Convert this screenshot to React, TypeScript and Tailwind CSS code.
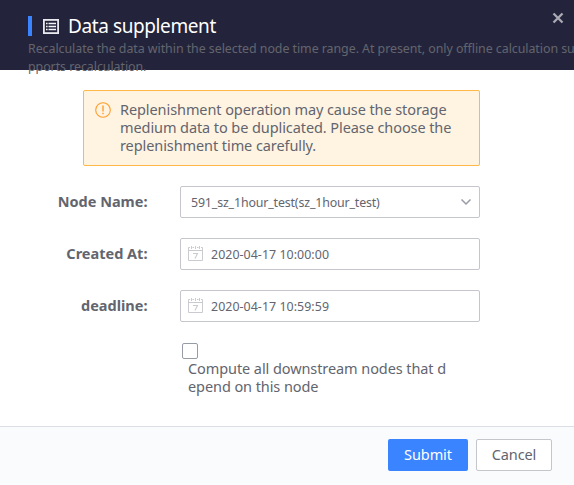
import React from "react";

function ListIcon() {
  return (
    <svg width="16" height="15" viewBox="0 0 16 15" fill="none" className="shrink-0">
      <rect x="0.9" y="0.9" width="14.2" height="13.2" stroke="#e9e9ef" strokeWidth="1.8" />
      <path d="M5.5 4.5H13M5.5 7.5H13M5.5 10.5H13M3 4.5H4.6M3 7.5H4.6M3 10.5H4.6" stroke="#f4f4f8" strokeWidth="1.5" />
    </svg>
  );
}

function CalendarIcon() {
  return (
    <svg width="16" height="16" viewBox="0 0 16 16" fill="none" stroke="#c9cbd1" className="shrink-0">
      <path d="M2 1.5H0.5V14.5H14.5V1.5H13M4.5 1.5H6M9 1.5H10.5M0.5 4.5H14.5" />
      <path d="M3.5 0V3M7.5 0V3M11.5 0V3" />
      <path d="M5 7.5H9.5L7 12.5" strokeWidth="1.1" />
    </svg>
  );
}

function Row({ label, children }: { label: string; children: React.ReactNode }) {
  return (
    <div className="flex h-8 items-center">
      <div className="w-[147.5px] whitespace-nowrap pb-[2px] text-right text-[14.5px] leading-[30px] font-bold">{label}</div>
      <div className="ml-[32.5px] flex h-8 w-[300px] items-center rounded-[2px] border border-[#c4c6cc] bg-white text-[12.4px]">
        {children}
      </div>
    </div>
  );
}

export default function App() {
  return (
    <div className="flex h-[485px] w-[574px] flex-col overflow-hidden bg-white font-['Noto_Sans',sans-serif] text-[#63656e]">
      <header className="h-[70px] shrink-0 bg-[#23243b]">
        <div className="flex h-10 pl-7">
          <div className="mt-4 h-5 w-1 bg-[#3a84ff]" />
          <div className="mt-[19px] ml-[11px]">
            <ListIcon />
          </div>
          <h1 className="mt-[12px] ml-[9px] text-[19px] leading-7 tracking-[-0.4px] whitespace-nowrap text-white">Data supplement</h1>
          <svg width="12" height="12" viewBox="0 0 12 12" className="mt-3 mr-[10px] ml-auto">
            <path d="M1.5 1.5L10.5 10.5M10.5 1.5L1.5 10.5" stroke="#aaaab5" strokeWidth="2.3" />
          </svg>
        </div>
        <p className="pl-7 text-[12.4px] leading-[18px] tracking-[-0.045px] whitespace-nowrap">
          Recalculate the data within the selected node time range. At present, only offline calculation su
          <br />
          pports recalculation.
        </p>
      </header>

      <main className="flex-1">
        <div className="mt-5 ml-[83px] flex h-[76px] w-[397px] rounded-[2px] border border-[#ffb848] bg-[#fff4e2] pt-[9px]">
          <svg width="16" height="16" viewBox="0 0 16 16" fill="none" stroke="#ff9c2b" className="mt-[2px] ml-[11px] shrink-0">
            <circle cx="8" cy="8" r="7.3" strokeWidth="1.1" />
            <path d="M8 3.5V9.5M8 10.8V12.3" strokeWidth="1.4" />
          </svg>
          <p className="ml-[9px] text-[14.5px] leading-[18px] tracking-[-0.085px] whitespace-nowrap">
            Replenishment operation may cause the storage
            <br />
            medium data to be duplicated. Please choose the
            <br />
            replenishment time carefully.
          </p>
        </div>

        <div className="mt-5 flex flex-col gap-5">
          <Row label="Node Name:">
            <span className="mt-[2px] ml-[10px] tracking-[-0.15px]">591_sz_1hour_test(sz_1hour_test)</span>
            <svg width="12" height="8" viewBox="0 0 12 8" fill="none" className="mr-[7px] ml-auto">
              <path d="M1.5 1.5L6 6L10.5 1.5" stroke="#979ba5" strokeWidth="1.5" />
            </svg>
          </Row>
          <Row label="Created At:">
            <span className="ml-[7px]"><CalendarIcon /></span>
            <span className="mt-[2px] ml-[7px] tracking-[0.05px]">2020-04-17 10:00:00</span>
          </Row>
          <Row label="deadline:">
            <span className="ml-[7px]"><CalendarIcon /></span>
            <span className="mt-[2px] ml-[7px] tracking-[0.05px]">2020-04-17 10:59:59</span>
          </Row>
        </div>

        <label className="mt-[21px] ml-[182px] block">
          <span className="block h-4 w-4 rounded-[2px] border border-[#979ba5] bg-white" />
          <span className="ml-[6px] block text-[14.5px] leading-[18px] tracking-[-0.085px] whitespace-nowrap">
            Compute all downstream nodes that d
            <br />
            epend on this node
          </span>
        </label>
      </main>

      <footer className="flex h-[59px] shrink-0 justify-end gap-2 border-t border-[#dcdee5] bg-[#fafbfd] pt-3 pr-[22px] text-[14.5px] tracking-[-0.1px]">
        <button className="h-8 w-20 rounded-[2px] bg-[#3a84ff] pb-[2px] leading-[30px] text-white">Submit</button>
        <button className="h-8 w-[76px] rounded-[2px] border border-[#c4c6cc] bg-white pb-[2px] leading-[28px]">Cancel</button>
      </footer>
    </div>
  );
}
